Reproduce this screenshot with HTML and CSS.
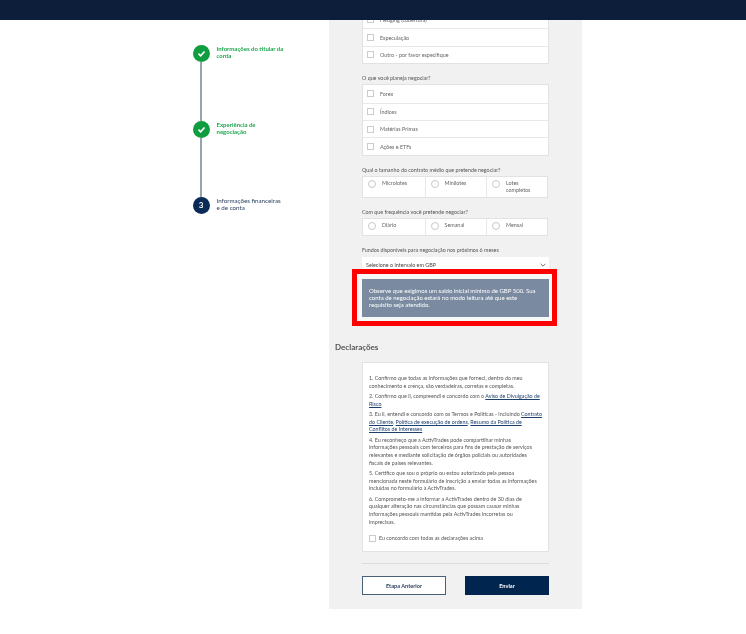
FILE: index.html
```html
<!DOCTYPE html>
<html lang="pt-BR">

<head>
  <meta charset="UTF-8">
  <meta name="viewport" content="width=device-width, initial-scale=1.0">
  <title>Abertura de conta</title>
  <link rel="stylesheet" href="styles.css">
</head>

<body>
  <header class="topbar"></header>

  <div class="page">
    <aside class="steps">
      <div class="step done">
        <div class="step-track">
          <span class="step-dot"><svg viewBox="0 0 10 10" width="9" height="9"><path d="M1.6 5.2 4 7.5 8.4 2.8" fill="none" stroke="#fff" stroke-width="1.9"/></svg></span>
          <span class="step-line"></span>
        </div>
        <p class="step-label">Informações do titular da<br>conta</p>
      </div>
      <div class="step done">
        <div class="step-track">
          <span class="step-dot"><svg viewBox="0 0 10 10" width="9" height="9"><path d="M1.6 5.2 4 7.5 8.4 2.8" fill="none" stroke="#fff" stroke-width="1.9"/></svg></span>
          <span class="step-line"></span>
        </div>
        <p class="step-label">Experiência de<br>negociação</p>
      </div>
      <div class="step current">
        <div class="step-track">
          <span class="step-dot">3</span>
        </div>
        <p class="step-label">Informações financeiras<br>e de conta</p>
      </div>
    </aside>

    <main class="panel">
      <div class="form-col">
        <ul class="check-list">
          <li><span class="box"></span>Hedging (cobertura)</li>
          <li><span class="box"></span>Especulação</li>
          <li><span class="box"></span>Outro - por favor especifique</li>
        </ul>

        <p class="question">O que você planeja negociar?</p>
        <ul class="check-list">
          <li><span class="box"></span>Forex</li>
          <li><span class="box"></span>Índices</li>
          <li><span class="box"></span>Matérias Primas</li>
          <li><span class="box"></span>Ações e ETFs</li>
        </ul>

        <p class="question">Qual o tamanho do contrato médio que pretende negociar?</p>
        <div class="radio-row tall">
          <div class="radio"><span class="circle"></span>Microlotes</div>
          <div class="radio"><span class="circle"></span>Minilotes</div>
          <div class="radio"><span class="circle"></span>Lotes completos</div>
        </div>

        <p class="question">Com que frequência você pretende negociar?</p>
        <div class="radio-row">
          <div class="radio"><span class="circle"></span>Diário</div>
          <div class="radio"><span class="circle"></span>Semanal</div>
          <div class="radio"><span class="circle"></span>Mensal</div>
        </div>

        <p class="question">Fundos disponíveis para negociação nos próximos 6 meses</p>
        <div class="select">
          <span>Selecione o intervalo em GBP</span>
          <svg viewBox="0 0 10 6" width="6" height="4"><path d="M1 1 5 5 9 1" fill="none" stroke="#444" stroke-width="1.3"/></svg>
        </div>

        <div class="alert">Observe que exigimos um saldo inicial mínimo de GBP 500. Sua conta de negociação estará no modo leitura até que este requisito seja atendido.</div>
      </div>

      <h3 class="section-title">Declarações</h3>

      <div class="form-col">
        <div class="terms">
          <p>1. Confirmo que todas as informações que forneci, dentro do meu<br>conhecimento e crença, são verdadeiras, corretas e completas.</p>
          <p>2. Confirmo que li, compreendi e concordo com o <a href="#">Aviso de Divulgação de<br>Risco</a></p>
          <p>3. Eu li, entendi e concordo com os Termos e Políticas - incluindo <a href="#">Contrato<br>do Cliente</a>, <a href="#">Política de execução de ordens</a>, <a href="#">Resumo da Política de<br>Conflitos de Interesses</a></p>
          <p>4. Eu reconheço que a ActivTrades pode compartilhar minhas<br>informações pessoais com terceiros para fins de prestação de serviços<br>relevantes e mediante solicitação de órgãos policiais ou autoridades<br>fiscais de países relevantes.</p>
          <p>5. Certifico que sou o próprio ou estou autorizado pela pessoa<br>mencionada neste formulário de inscrição a enviar todas as informações<br>incluídas no formulário à ActivTrades.</p>
          <p>6. Comprometo-me a informar a ActivTrades dentro de 30 dias de<br>qualquer alteração nas circunstâncias que possam causar minhas<br>informações pessoais mantidas pela ActivTrades incorretas ou<br>imprecisas.</p>
          <div class="agree"><span class="box"></span>Eu concordo com todas as declarações acima</div>
        </div>

        <hr class="divider">

        <div class="actions">
          <button class="btn btn-outline">Etapa Anterior</button>
          <button class="btn btn-solid">Enviar</button>
        </div>
      </div>
    </main>
  </div>
</body>

</html>
```

FILE: styles.css
```css
* {
  box-sizing: border-box;
}

body {
  margin: 0;
  background-color: #fff;
  font-family: Lato, "Open Sans", sans-serif;
  color: #555;
  overflow: hidden;
}

p,
ul,
h3 {
  margin: 0;
  padding: 0;
}

.topbar {
  position: fixed;
  top: 0;
  left: 0;
  right: 0;
  height: 20px;
  background-color: #0c1e3a;
  z-index: 5;
}

.page {
  display: flex;
  padding-left: 192.5px;
  filter: blur(0.3px);
}

/* stepper */
.steps {
  width: 136.5px;
  padding-top: 44.5px;
}

.step {
  display: flex;
  gap: 7px;
  height: 76px;
}

.step-track {
  display: flex;
  flex-direction: column;
  align-items: center;
  width: 17px;
}

.step-dot {
  display: flex;
  align-items: center;
  justify-content: center;
  flex: none;
  width: 17px;
  height: 17px;
  border-radius: 50%;
  font-size: 8px;
  font-weight: 700;
  color: #fff;
}

.step-line {
  flex: 1;
  width: 2px;
  background-color: #98a4ad;
}

.step.done .step-dot {
  background-color: #0f9d3f;
}

.step.current .step-dot {
  background-color: #0a2a58;
}

.step-label {
  font-size: 6px;
  line-height: 7.2px;
  padding-top: 0.7px;
  white-space: nowrap;
}

.step.done .step-label {
  color: #1fa64f;
  font-weight: 700;
}

.step.current .step-label {
  color: #2a4060;
  font-size: 6.2px;
}

/* form panel */
.panel {
  width: 253px;
  height: 609px;
  padding: 10px 6px 0;
  background-color: #f1f1f1;
}

.form-col {
  padding: 0 27px;
  width: 241px;
}

.check-list {
  list-style: none;
  background-color: #fff;
  border: 1px solid #e2e2e2;
}

.check-list li {
  display: flex;
  align-items: center;
  height: 17.4px;
  padding-left: 4px;
  font-size: 5.4px;
  color: #666;
  border-top: 1px solid #e8e8e8;
}

.check-list li:first-child {
  border-top: none;
}

.box {
  flex: none;
  width: 7px;
  height: 7px;
  margin-right: 6px;
  background-color: #fff;
  border: 1px solid #ccc;
}

.question {
  height: 8px;
  margin: 10px 0 2px;
  font-size: 5.35px;
  line-height: 8px;
  color: #555;
  white-space: nowrap;
}

.radio-row {
  display: grid;
  grid-template-columns: 61.5px 61.5px 60.5px;
  width: 185.5px;
  height: 18px;
  background-color: #fff;
  border: 1px solid #e2e2e2;
}

.radio-row.tall {
  height: 22.5px;
}

.radio {
  display: flex;
  align-items: flex-start;
  padding: 3px 4px 0 5px;
  font-size: 5.4px;
  line-height: 7px;
  color: #666;
  border-left: 1px solid #e8e8e8;
}

.radio:first-child {
  border-left: none;
}

.circle {
  flex: none;
  width: 8px;
  height: 8px;
  margin-right: 6px;
  border: 1px solid #c8c8c8;
  border-radius: 50%;
}

.select {
  display: flex;
  align-items: center;
  justify-content: space-between;
  height: 22px;
  padding: 0 3px 6px 4px;
  margin-top: 3px;
  background-color: #fff;
  font-size: 5.4px;
  color: #444;
}

.alert {
  position: relative;
  height: 37.5px;
  padding: 8.2px 11px 8.2px 7px;
  background-color: #7a8ba1;
  color: #fff;
  font-size: 6px;
  line-height: 7px;
  box-shadow: 0 0 0 5px #f6f7f7;
}

/* red annotation frame from the screenshot */
.alert::after {
  content: "";
  position: absolute;
  top: -10px;
  right: -8px;
  bottom: -9px;
  left: -10px;
  border: 5px solid #f00;
}

.section-title {
  margin: 24px 0 9.2px;
  font-size: 8px;
  font-weight: 700;
  line-height: 12px;
  color: #555;
}

.terms {
  height: 190px;
  padding: 12px 6px 0;
  background-color: #fff;
  border: 1px solid #e2e2e2;
  font-size: 5.35px;
  line-height: 7.7px;
  color: #555;
  white-space: nowrap;
}

.terms p {
  margin-bottom: 2.6px;
}

.terms a {
  color: #1d3f6e;
}

.agree {
  display: flex;
  align-items: center;
  margin-top: 8px;
  font-size: 5.3px;
}

.agree .box {
  margin-right: 3px;
}

.divider {
  margin: 11px 0 12px;
  border: none;
  border-top: 1px solid #dcdcdc;
}

.actions {
  display: flex;
  justify-content: space-between;
}

.btn {
  width: 84px;
  height: 19px;
  padding: 0;
  font-family: inherit;
  font-size: 5.6px;
  font-weight: 700;
  cursor: pointer;
}

.btn-outline {
  background-color: #fff;
  border: 1px solid #4a6078;
  color: #2a3f5c;
}

.btn-solid {
  background-color: #00254f;
  border: 1px solid #00254f;
  color: #fff;
}
```
